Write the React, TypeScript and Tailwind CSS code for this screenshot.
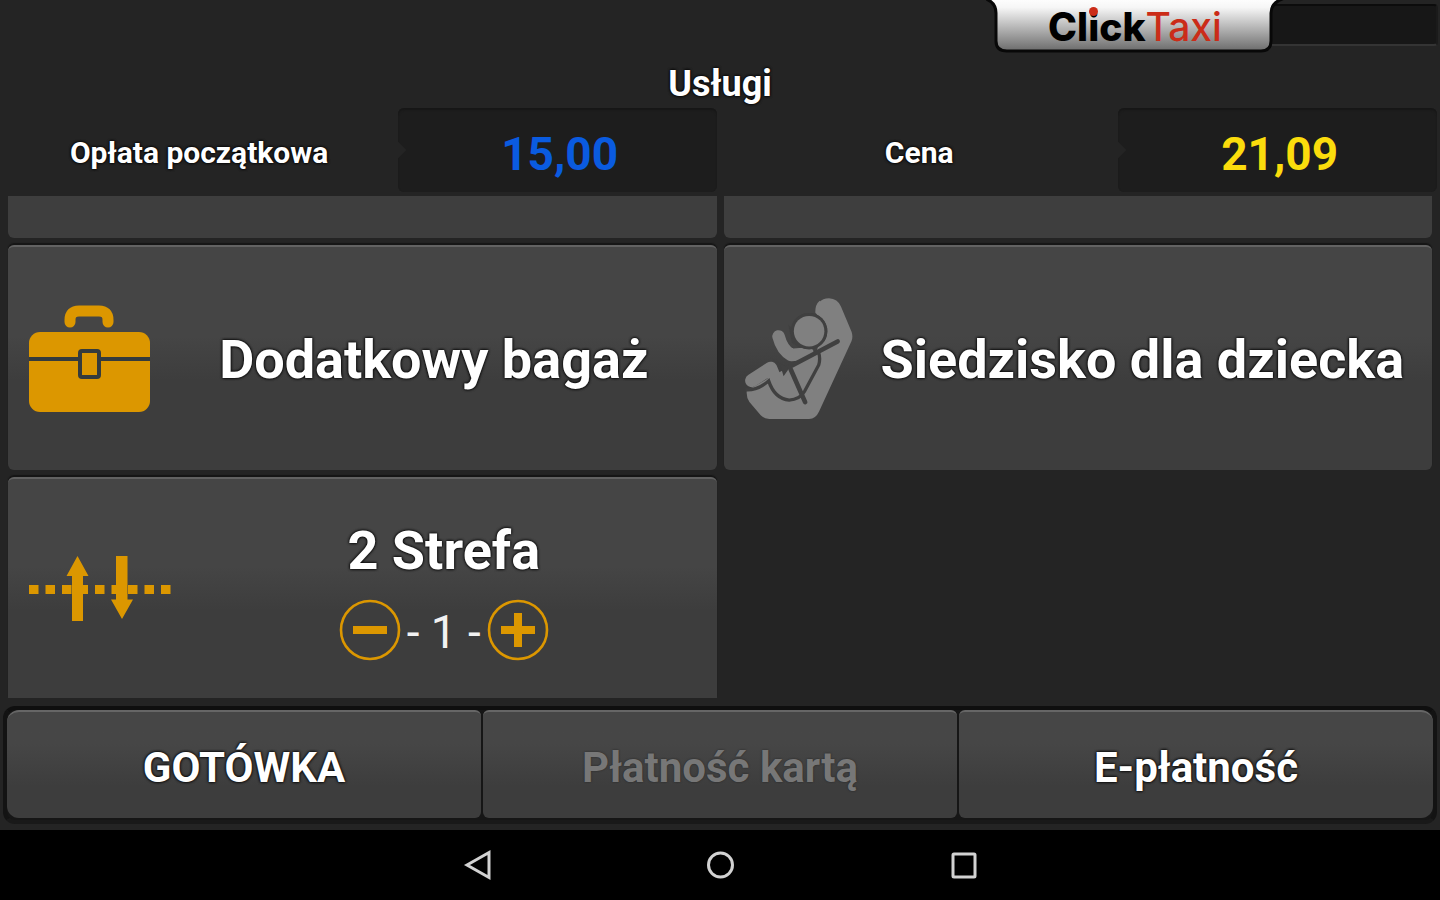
import type { ReactNode } from "react";

const tileClass =
  "flex items-center border-t-2 border-[#626262] bg-linear-to-b from-[#454545] from-40% to-[#3d3d3d] to-60% pl-[21px] shadow-[0_-2px_1px_#161616]";

const textShadow = "[text-shadow:0_0_3px_#000,0_0_3px_#000]";

const titleClass = `pt-0.5 text-[54px] leading-[64px] font-bold text-white ${textShadow}`;

const payments = [
  { label: "GOTÓWKA", disabled: false },
  { label: "Płatność kartą", disabled: true },
  { label: "E-płatność", disabled: false },
];

function LuggageIcon() {
  return (
    <svg width="122" height="108" viewBox="1 0 122 108" fill="none" aria-hidden="true">
      <path d="M42 17V15Q42 6 51 6H71Q80 6 80 15V17" stroke="#dc9700" strokeWidth="11" strokeLinecap="round" />
      <rect x="1" y="27" width="121" height="80" rx="11" fill="#dc9700" />
      <path d="M1 54H122" stroke="#343b3d" strokeWidth="4" />
      <rect x="52" y="46" width="19" height="26" rx="2" fill="#dc9700" stroke="#343b3d" strokeWidth="4" />
    </svg>
  );
}

function ChildSeatIcon() {
  return (
    <svg width="108" height="122" viewBox="75 50 325 368" fill="none" aria-hidden="true">
      <path
        d="M288 92Q290 53 328 51Q354 52 364 76L396 152Q401 166 396 180L298 392Q288 414 268 415H148Q132 414 122 404L88 364Q78 350 80 330L148 290L205 260L290 212L310 150Z"
        fill="#808080"
      />
      <path d="M150 230L180 250L191 286L208 262Z" fill="#404040" />
      <path d="M176 166Q186 206 214 222L258 218" stroke="#808080" strokeWidth="38" strokeLinecap="round" strokeLinejoin="round" />
      <path d="M95 299L152 262L170 306" stroke="#808080" strokeWidth="40" strokeLinecap="round" strokeLinejoin="round" />
      <circle cx="268" cy="150" r="55" fill="#404040" />
      <path d="M287 95Q285 70 300 58L330 100L322 122Q310 104 287 95Z" fill="#808080" />
      <path d="M205 130L216 185L240 200L262 190Z" fill="#404040" />
      <path d="M176 166Q186 206 220 216L272 212" stroke="#808080" strokeWidth="18" strokeLinecap="round" />
      <circle cx="268" cy="150" r="50" stroke="#404040" strokeWidth="10" />
      <circle cx="268" cy="150" r="46" fill="#808080" />
      <path d="M76 327Q112 330 146 300Q164 354 208 358Q240 356 254 332L297 252Q303 232 296 212" stroke="#404040" strokeWidth="10" />
      <path d="M208 258L354 181M212 264L256 364" stroke="#404040" strokeWidth="14" strokeLinecap="round" />
    </svg>
  );
}

function ZoneIcon() {
  const dots = [0, 1, 2, 3, 4, 5, 6, 7, 8];
  return (
    <svg width="142" height="65" viewBox="0 0 142 65" fill="#dc9700" aria-hidden="true">
      {dots.map((dot) => (
        <rect key={dot} x={dot * 16.5} y="29" width="9.5" height="9" />
      ))}
      <path d="M48.5 0L59.5 20H54V65H43V20H37.5Z" />
      <path d="M87 0H98.5V43.5H104L93 63L82 43.5H87Z" />
    </svg>
  );
}

function StepButton({ label, d }: { label: string; d: string }) {
  return (
    <button type="button" aria-label={label}>
      <svg width="62" height="62" viewBox="0 0 62 62" fill="none" stroke="#dc9700" aria-hidden="true">
        <circle cx="31" cy="31" r="29" strokeWidth="2.6" />
        <path d={d} strokeWidth="8" />
      </svg>
    </button>
  );
}

function Amount({ id, label, children }: { id: string; label: string; children: ReactNode }) {
  return (
    <div className="grid flex-1 grid-cols-[5fr_4fr] pr-[3px]">
      <label
        htmlFor={id}
        className={`flex items-center justify-center pt-1.5 text-[30px] leading-9 font-bold text-white ${textShadow}`}
      >
        {label}
      </label>
      <div className="relative flex items-center justify-center overflow-hidden rounded-md bg-[#1d1d1d] pt-2 pl-1 shadow-[inset_0_2px_2px_#171717]">
        <span className="absolute -left-1.5 top-9 size-3 rotate-45 bg-[#242424]" />
        {children}
      </div>
    </div>
  );
}

function BrandTab() {
  return (
    <div className="relative z-10 flex h-[54px] w-[298px] items-center justify-center">
      <svg className="absolute inset-0 size-full" viewBox="0 0 298 54" preserveAspectRatio="none" aria-hidden="true">
        <defs>
          <linearGradient id="tab" x1="0" y1="0" x2="0" y2="1">
            <stop offset="0" stopColor="#fff" />
            <stop offset="0.18" stopColor="#f6f6f6" />
            <stop offset="1" stopColor="#6b6b6b" />
          </linearGradient>
        </defs>
        <path
          d="M-2 -2Q10 2 10 13V41Q10 51 21 51H275Q285 51 285 41V13Q285 2 299 -2Z"
          fill="url(#tab)"
          stroke="#080808"
          strokeWidth="3"
        />
      </svg>
      <p className="relative font-['Inter',sans-serif] text-[39px] leading-[52px]">
        <span className="font-extrabold text-black">
          Cl
          <span className="relative">
            i
            <span className="absolute inset-x-0 top-1 mx-auto size-[9px] rounded-full bg-[#cb2c18]" />
          </span>
          ck
        </span>
        <span className="font-medium text-[#cb2c18]">Taxi</span>
      </p>
    </div>
  );
}

export default function App() {
  return (
    <div className="flex min-h-screen flex-col bg-[#242424] font-['Roboto',sans-serif]">
      <header>
        <div className="flex h-[54px] justify-end pr-0.5">
          <BrandTab />
          <div className="-ml-4 mt-1 h-[42px] w-[170px] rounded-sm border-2 border-t-[#0c0c0c] border-r-[#1b1b1b] border-b-[#343434] border-l-black bg-[#171717]" />
        </div>
        <h1 className={`h-[54px] pt-2 text-center text-[36px] leading-11 font-bold text-white ${textShadow}`}>
          Usługi
        </h1>
        <div className="flex h-[84px]">
          <Amount id="start-fee" label="Opłata początkowa">
            <output id="start-fee" className="text-[46px] leading-[52px] font-bold text-[#0a5be0]">
              15,00
            </output>
          </Amount>
          <Amount id="price" label="Cena">
            <output id="price" className="text-[46px] leading-[52px] font-bold text-[#fbdc0c]">
              21,09
            </output>
          </Amount>
        </div>
      </header>

      <main className="grid flex-1 grid-cols-2 grid-rows-[42px_225px_1fr] gap-x-[7px] gap-y-[7px] px-2 pt-1">
        <div className="rounded-b-md bg-[#3e3e3e]" />
        <div className="rounded-b-md bg-[#3e3e3e]" />
        <button type="button" className={`${tileClass} rounded-md`}>
          <LuggageIcon />
          <span className={`${titleClass} flex-1 text-center`}>Dodatkowy bagaż</span>
        </button>
        <button type="button" className={`${tileClass} rounded-md`}>
          <ChildSeatIcon />
          <span className={`${titleClass} flex-1 text-center`}>Siedzisko dla dziecka</span>
        </button>
        <div className={`${tileClass} rounded-t-md`}>
          <ZoneIcon />
          <div className="flex flex-1 flex-col items-center gap-4">
            <h2 className={titleClass}>2 Strefa</h2>
            <div className="flex items-center gap-1.5">
              <StepButton label="Mniej" d="M14 31H48" />
              <span className="pt-1 text-[46px] leading-[52px] text-[#f2f2f2]">- 1 -</span>
              <StepButton label="Więcej" d="M14 31H48M31 14V48" />
            </div>
          </div>
        </div>
      </main>

      <footer>
        <div className="mt-2 px-[3px] pb-1.5">
          <div className="flex h-[118px] gap-0.5 rounded-xl border-4 border-t-[#0f0f0f] border-r-[#131313] border-b-[#191919] border-l-[#131313] bg-[#161616] pb-0.5">
            {payments.map((payment) => (
              <button
                key={payment.label}
                type="button"
                disabled={payment.disabled}
                className="flex-1 rounded-md border-t-2 border-[#666] bg-linear-to-b from-[#464646] from-30% to-[#3d3d3d] to-70% pt-1.5 text-[42px] leading-[50px] font-bold text-white [text-shadow:0_0_3px_#000,0_0_3px_#000] first:rounded-l-xl last:rounded-r-xl disabled:text-[#777] disabled:[text-shadow:0_0_2px_#222]"
              >
                {payment.label}
              </button>
            ))}
          </div>
        </div>
        <nav className="flex h-[70px] items-center justify-center gap-[213px] bg-black">
          <button type="button" aria-label="Wstecz">
            <svg width="30" height="32" viewBox="0 0 30 32" fill="none" stroke="#d2d2d2" strokeWidth="3" aria-hidden="true">
              <path d="M5 16L27 3.500V28.500Z" />
            </svg>
          </button>
          <button type="button" aria-label="Ekran główny">
            <svg width="30" height="32" viewBox="0 0 30 32" fill="none" stroke="#d2d2d2" strokeWidth="3" aria-hidden="true">
              <circle cx="15.500" cy="16" r="12" />
            </svg>
          </button>
          <button type="button" aria-label="Ostatnie aplikacje">
            <svg width="30" height="32" viewBox="0 0 30 32" fill="none" stroke="#d2d2d2" strokeWidth="3" aria-hidden="true">
              <rect x="5" y="5" width="22" height="23" rx="1" />
            </svg>
          </button>
        </nav>
      </footer>
    </div>
  );
}
